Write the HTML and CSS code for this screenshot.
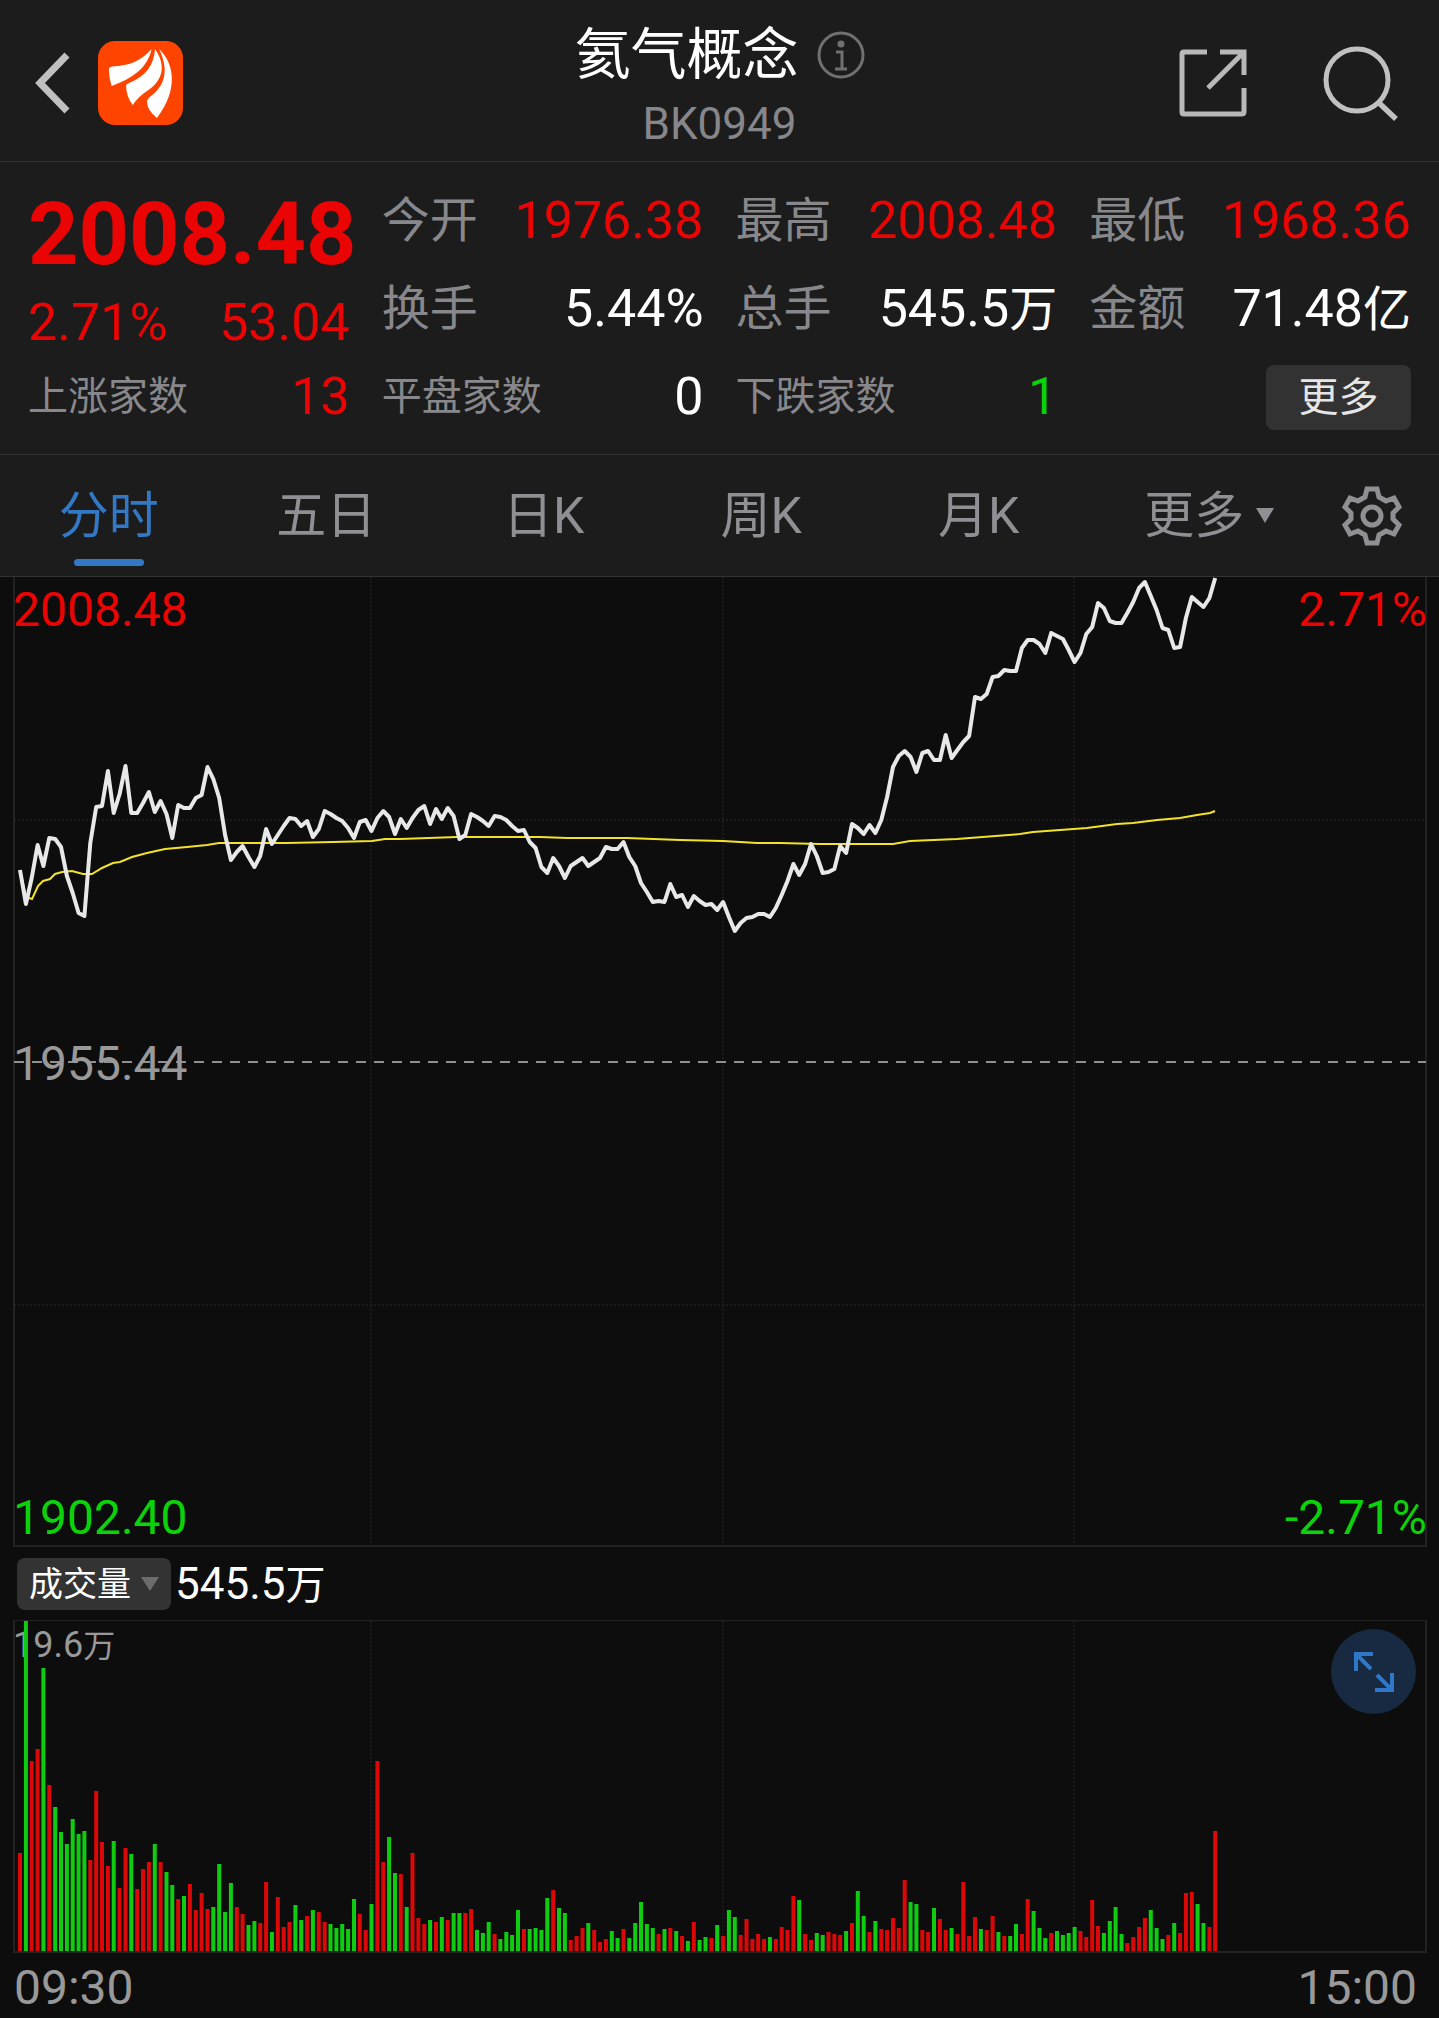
FILE: index.html
```html
<!DOCTYPE html>
<html lang="zh-CN">
<head>
<meta charset="utf-8">
<meta name="viewport" content="width=device-width, initial-scale=1">
<title>氦气概念 BK0949</title>
<link rel="stylesheet" href="styles.css">
</head>
<body>
<header class="topbar">
  <div class="topbar-left">
    <button class="icon-btn" type="button" aria-label="返回">
      <svg width="40" height="64" viewBox="0 0 40 64"><path d="M35 4 8 32 35 60" fill="none" stroke="#c0c0c0" stroke-width="7"/></svg>
    </button>
    <a class="logo" href="#" aria-label="首页">
      <svg width="85" height="84" viewBox="0 0 85 84">
        <rect width="85" height="84" rx="17" fill="#ff4400"/>
        <g fill="#fff">
          <path d="M53.500 8C51 21 42 35 13.600 45Q11 37 10.800 28Q11 26 14 25.500C32 25 44 19 53.500 8Z"/>
          <path d="M57 8C68 24 66 39 49 50Q40 56 34.700 64Q28.500 56 28 45Q28 43 31 42C48 35 56 24 57 8Z"/>
          <path d="M61 8C76 22 81 48 59 77Q49 69 49 61Q49 58 53 55C69 43 70 26 61 8Z"/>
        </g>
      </svg>
    </a>
  </div>
  <div class="topbar-title">
    <div class="title-row">
      <h1>氦气概念</h1>
      <button class="icon-btn" type="button" aria-label="说明">
        <svg width="48" height="48" viewBox="0 0 48 48" fill="none" stroke="#707070"><circle cx="24" cy="24" r="22" stroke-width="3"/><circle cx="24" cy="13" r="3.500" fill="#707070" stroke="none"/><path d="M19 21H25V38M18 38H30" stroke-width="3"/></svg>
      </button>
    </div>
    <p class="code">BK0949</p>
  </div>
  <div class="topbar-right">
    <button class="icon-btn" type="button" aria-label="分享">
      <svg width="68" height="68" viewBox="0 0 68 68" fill="none" stroke="#b8b8b8" stroke-width="5"><path d="M28 3H5Q3 3 3 5V63Q3 65 5 65H62Q65 65 65 63V39M41 3H65V26M64 4 29 39"/></svg>
    </button>
    <button class="icon-btn" type="button" aria-label="搜索">
      <svg width="76" height="76" viewBox="0 0 76 76" fill="none" stroke="#c0c0c0"><circle cx="34" cy="35" r="31" stroke-width="5"/><path d="M55 57 73 74" stroke-width="5.500"/></svg>
    </button>
  </div>
</header>

<section class="quote">
  <div class="quote-col">
    <div class="price up">2008.48</div>
    <div class="change up"><span>2.71%</span><span>53.04</span></div>
    <div class="row row-count"><span class="label small">上涨家数</span><span class="up">13</span></div>
  </div>
  <div class="quote-col">
    <div class="row"><span class="label">今开</span><span class="up">1976.38</span></div>
    <div class="row"><span class="label">换手</span><span>5.44%</span></div>
    <div class="row"><span class="label small">平盘家数</span><span>0</span></div>
  </div>
  <div class="quote-col">
    <div class="row"><span class="label">最高</span><span class="up">2008.48</span></div>
    <div class="row"><span class="label">总手</span><span>545.5<span class="unit">万</span></span></div>
    <div class="row"><span class="label small">下跌家数</span><span class="down">1</span></div>
  </div>
  <div class="quote-col">
    <div class="row"><span class="label">最低</span><span class="up">1968.36</span></div>
    <div class="row"><span class="label">金额</span><span>71.48<span class="unit">亿</span></span></div>
    <div class="row row-end"><button class="more-btn" type="button">更多</button></div>
  </div>
</section>

<nav class="tabs">
  <button class="tab active" type="button">分时</button>
  <button class="tab" type="button">五日</button>
  <button class="tab" type="button">日K</button>
  <button class="tab" type="button">周K</button>
  <button class="tab" type="button">月K</button>
  <button class="tab tab-more" type="button">更多<svg width="18" height="15" viewBox="0 0 18 15"><path d="M0 0H18L9 15Z" fill="#8f8f94"/></svg></button>
  <button class="tab-gear" type="button" aria-label="设置">
    <svg width="60" height="60" viewBox="0 0 60 60" fill="none" stroke="#8f8f94" stroke-width="5"><path d="M25 3H35L37 11L44 15L52 12L57 21L51 27V33L57 39L52 48L44 45L37 49L35 57H25L23 49L16 45L8 48L3 39L9 33V27L3 21L8 12L16 15L23 11Z"/><circle cx="30" cy="30" r="9"/></svg>
  </button>
</nav>

<main>
  <section class="plot plot-price" aria-label="分时走势">
    <svg viewBox="1 0 1410 968" preserveAspectRatio="none">
      <path class="grid" d="M357 0V968M709 0V968M1060 0V968M0 243H1412M0 728H1412"/>
      <path class="base" d="M0 485H1412"/>
      <polyline class="avg" points="6,293 12,320 18,322 24,309 29,304 36,302 41,297 48,295 58,294 69,297 78,297 88,291 99,286 106,285 118,280 133,276 151,272 173,270 193,268 205,266 273,266 319,265 358,264 371,262 386,262 443,260 489,260 526,260 553,261 613,261 666,263 709,264 743,266 766,266 806,267 879,267 896,264 943,262 1006,257 1019,255 1073,251 1103,247 1119,246 1143,243 1166,241 1183,238 1196,236 1201,234"/>
      <polyline class="last" id="price-line"/>
    </svg>
    <span class="mark top-left up">2008.48</span>
    <span class="mark top-right up">2.71%</span>
    <span class="mark mid-left">1955.44</span>
    <span class="mark bottom-left down">1902.40</span>
    <span class="mark bottom-right down">-2.71%</span>
  </section>

  <div class="volume-head">
    <span class="picker">
      <select aria-label="指标"><option>成交量</option></select>
      <svg width="18" height="14" viewBox="0 0 18 14"><path d="M0 0H18L9 14Z" fill="#6c6c6c"/></svg>
    </span>
    <span class="volume-total">545.5<span class="unit">万</span></span>
  </div>

  <section class="plot plot-volume" aria-label="成交量">
    <span class="mark volume-max">19.6<span class="unit">万</span></span>
    <svg viewBox="1 0 1410 330" preserveAspectRatio="none">
      <path class="grid" d="M357 0V330M709 0V330M1060 0V330"/>
      <path class="bar-up" id="bars-up"/>
      <path class="bar-down" id="bars-down"/>
    </svg>
    <button class="expand" type="button" aria-label="全屏">
      <svg width="42" height="42" viewBox="0 0 42 42" fill="none" stroke="#2f78c8" stroke-width="4"><path d="M20 3H3V20M3 3 18 18M24 24 39 39M22 39H39V22"/></svg>
    </button>
  </section>

  <div class="times"><span>09:30</span><span>15:00</span></div>
</main>
<script src="chart.js"></script>
</body>
</html>
```
FILE: styles.css
```css
* { box-sizing: border-box; }

body {
  margin: 0;
  background: #0d0d0d;
  color: #fff;
  font-family: Roboto, "Noto Sans CJK SC", sans-serif;
}

h1, p { margin: 0; font-weight: 400; }

button {
  padding: 0;
  border: 0;
  background: none;
  color: inherit;
  font: inherit;
}

svg { display: block; }

.up { color: #ea0404; }
.down { color: #0bd20b; }

/* Top bar */
.topbar {
  display: grid;
  grid-template-columns: 1fr auto 1fr;
  align-items: center;
  height: 162px;
  padding: 0 40px;
  border-bottom: 1px solid #333;
  background: #1c1c1c;
}
.topbar-left { display: flex; align-items: center; gap: 26px; margin-left: -8px; padding-top: 4px; }
.topbar-right { display: flex; align-items: center; justify-content: flex-end; gap: 76px; padding-top: 4px; }
.topbar-title { display: flex; flex-direction: column; align-items: center; padding-top: 10px; }
.title-row { display: flex; align-items: center; gap: 18px; }
.title-row h1 { font-size: 56px; line-height: 76px; }
.code { color: #87878b; font-size: 44px; line-height: 62px; }

/* Quote summary */
.quote {
  display: grid;
  grid-template-columns: repeat(4, minmax(0, 1fr));
  gap: 32px;
  padding: 15px 28px 13px;
  border-bottom: 1px solid #333;
  background: #1c1c1c;
  font-size: 52px;
  line-height: 60px;
  white-space: nowrap;
}
.row { display: flex; align-items: center; justify-content: space-between; height: 88px; }
.row-end { justify-content: flex-end; }
.row-count { height: 76px; }
.label { color: #88888c; font-size: 48px; }
.label.small { font-size: 40px; }
.unit { font-size: 48px; line-height: 1; }
.price { padding-top: 4px; font-size: 88px; font-weight: 700; line-height: 106px; }
.change { display: flex; justify-content: space-between; line-height: 72px; }
.more-btn {
  width: 145px;
  height: 65px;
  border-radius: 8px;
  background: #323232;
  color: #e6e6e6;
  font-size: 40px;
  line-height: 65px;
}

/* Period tabs */
.tabs {
  display: grid;
  grid-template-columns: repeat(6, minmax(0, 1fr)) 134px;
  height: 122px;
  border-bottom: 1px solid #333;
  background: #1c1c1c;
  color: #8f8f94;
  font-size: 50px;
  line-height: 60px;
}
.tab { position: relative; }
.tab.active { color: #3278c4; }
.tab.active::after {
  content: "";
  position: absolute;
  bottom: 10px;
  left: calc(50% - 35px);
  width: 70px;
  height: 7px;
  border-radius: 4px;
  background: #3278c4;
}
.tab-more { display: flex; align-items: center; justify-content: center; gap: 12px; padding-left: 26px; }
.tab-gear { display: grid; place-items: center; }

/* Charts */
.plot { position: relative; margin: 0 12px 0 13px; border: 2px solid #222; }
.plot > svg { width: 100%; overflow: visible; }
.plot-price { border-top: 0; }
.plot-price > svg { height: 968px; }
.plot-volume { border-top-width: 1px; }
.plot-volume > svg { position: relative; height: 330px; }

.grid { fill: none; stroke: #2a2a2a; stroke-width: 1; stroke-dasharray: 2 2; }
.base { fill: none; stroke: #909090; stroke-width: 2; stroke-dasharray: 10 8; }
.last { fill: none; stroke: #e8e8e8; stroke-width: 4; stroke-linejoin: round; }
.avg { fill: none; stroke: #f2e32a; stroke-width: 2; }
.bar-up, .bar-down { fill: none; stroke-width: 4; }
.bar-up { stroke: #dc0808; }
.bar-down { stroke: #10cc10; }

.mark { position: absolute; color: #999; font-size: 48px; line-height: 58px; }
.mark.up { color: #ea0404; }
.mark.down { color: #0bd20b; }
.top-left { top: 4px; left: -2px; }
.top-right { top: 4px; right: -2px; }
.mid-left { top: 458px; left: -2px; }
.bottom-left { bottom: -2px; left: -2px; }
.bottom-right { bottom: -2px; right: -2px; }
.volume-max { top: 0; left: -2px; font-size: 36px; line-height: 48px; }
.volume-max .unit { font-size: 32px; }

.volume-head { display: flex; align-items: center; gap: 4px; height: 73px; padding-left: 17px; }
.picker { display: grid; align-items: center; width: 154px; }
.picker > * { grid-area: 1 / 1; }
.picker svg { justify-self: end; margin-right: 12px; pointer-events: none; }
.picker select {
  width: 100%;
  height: 52px;
  padding: 0 0 0 12px;
  border: 0;
  border-radius: 8px;
  appearance: none;
  background: #333;
  color: #fff;
  font-family: inherit;
  font-size: 34px;
}
.volume-total { font-size: 44px; line-height: 56px; }
.volume-total .unit { font-size: 40px; }

.expand {
  position: absolute;
  top: 8px;
  right: 9px;
  display: grid;
  place-items: center;
  width: 85px;
  height: 85px;
  border-radius: 50%;
  background: #172a41;
}

.times {
  display: flex;
  justify-content: space-between;
  padding: 5px 22px 0 14px;
  color: #999;
  font-size: 48px;
  line-height: 60px;
}
```
FILE: chart.js
```js
// One entry per minute; the full session is 241 minutes across 1412 units.
const STEP = 1412 / 241;
const START = 6;

const prices = [
  293,327,301,268,289,261,262,270,299,316,336,339,266,230,229,194,236,217,189,236,
  236,226,215,235,224,237,261,228,231,231,221,218,190,202,221,258,283,275,269,280,
  290,279,252,267,258,249,241,242,249,244,260,252,234,237,241,244,251,261,245,243,
  254,241,234,240,257,242,251,241,233,229,247,232,242,231,239,262,258,237,240,244,
  249,239,240,243,249,254,253,265,271,290,296,281,289,301,289,285,281,289,285,281,
  270,272,272,265,280,289,306,315,325,324,325,307,320,318,330,319,324,328,327,333,
  325,340,354,346,341,340,337,337,340,331,318,304,287,298,287,267,279,296,295,292,
  269,276,247,251,257,248,256,243,220,190,179,174,180,195,176,174,183,183,158,181,
  173,165,159,120,122,117,100,99,93,94,94,71,63,63,67,76,56,59,62,73,
  85,76,57,50,26,31,44,46,46,36,25,11,5,19,33,51,53,71,70,41,
  20,25,30,21,1
];

// R = rising minute, G = falling minute, followed by the bar height.
const volumes = `
R98 G330 R190 R202 G283 R166 G144 G119 G107 G132 G117 G120 R91 R160 R109 R85 G110 R63 R103 G97
R62 R82 R89 G107 R89 G79 G66 R52 G55 R67 R41 R58 R42 G44 G87 G39 G68 R44 R37 G26
G30 R28 R69 G19 R54 R24 R29 G46 G31 R35 G41 R39 R29 G27 G23 G27 G22 G52 R37 R21
G47 R190 R89 G114 G78 R77 G44 R98 R33 R27 G31 R29 G34 R31 G38 G38 R38 R42 G21 G18
G29 R17 G12 G19 G16 G41 R22 G22 G23 G21 G53 R61 G43 G38 R11 R15 R23 G28 R21 R9
R12 G20 G13 R22 G13 G28 G49 G27 G23 R17 G22 R23 G20 R15 G10 R29 G11 G14 R13 G26
R15 G41 G34 R16 R32 R12 R17 R12 G14 R12 R24 R21 R55 G51 R17 R11 G18 G16 R19 R17
R16 G20 R28 G60 G35 R19 G30 R22 R21 R33 R23 R71 G49 G47 R21 R19 G43 R32 R21 G23
R17 R69 R15 R34 G22 R21 R35 G19 R15 G15 G27 R17 R52 G40 G23 G13 R18 G20 G16 G18
G24 R20 R14 R51 R25 G18 G30 G44 G17 R8 R14 R24 R33 G41 G23 G12 R16 G28 R18 R58
R59 G47 G28 R24 R120`.trim().split(/\s+/);

const x = i => (START + i * STEP).toFixed(1);

document.getElementById("price-line")
  .setAttribute("points", prices.map((y, i) => `${x(i)},${y}`).join(" "));

const bars = kind => volumes
  .map((v, i) => v[0] === kind ? `M${x(i)} 330v-${v.slice(1)}` : "")
  .join("");
document.getElementById("bars-up").setAttribute("d", bars("R"));
document.getElementById("bars-down").setAttribute("d", bars("G"));
```
